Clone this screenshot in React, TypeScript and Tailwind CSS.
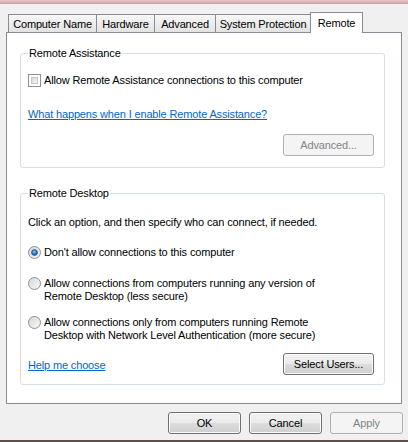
import React from 'react';

const TABS = [
  { label: 'Computer Name', w: 'w-[89px]' },
  { label: 'Hardware', w: 'w-[59px]' },
  { label: 'Advanced', w: 'w-[62px]' },
  { label: 'System Protection', w: 'w-[96px]' }
];

const BTN =
  'h-[22px] rounded-[3px] border border-[#707070] bg-[linear-gradient(to_bottom,#f2f2f2_0%,#ebebeb_50%,#dddddd_50%,#cfcfcf_100%)] shadow-[inset_0_0_0_1px_#fbfbfb] text-black flex items-center justify-center';
const BTN_OFF =
  'h-[22px] rounded-[3px] border border-[#adb2b5] bg-[#f4f4f4] text-[#838383] flex items-center justify-center';

function Checkbox() {
  return (
    <span className="w-[13px] h-[13px] shrink-0 border border-[#8e8f8f] bg-white p-[2px] flex">
      <span className="flex-1 border border-[#c4c4c4] bg-gradient-to-br from-[#d8d8d8] to-[#f6f6f6]" />
    </span>
  );
}

function Radio({ checked }: { checked?: boolean }) {
  return (
    <svg width="13" height="13" viewBox="0 0 13 13" className="shrink-0">
      <defs>
        <linearGradient id="rg" x1="0" y1="0" x2="1" y2="1">
          <stop offset="0" stopColor="#d6d6d6" />
          <stop offset="1" stopColor="#fafafa" />
        </linearGradient>
        <radialGradient id="bd" cx="0.45" cy="0.4" r="0.6">
          <stop offset="0" stopColor="#8fd0ff" />
          <stop offset="0.5" stopColor="#2f80d6" />
          <stop offset="1" stopColor="#1b4f9c" />
        </radialGradient>
      </defs>
      <circle cx="6.5" cy="6.5" r="6" fill="url(#rg)" stroke="#8e8f8f" strokeWidth="1" />
      {checked && <circle cx="6.5" cy="6.5" r="3" fill="url(#bd)" stroke="#1d4a8f" strokeWidth="0.6" />}
    </svg>
  );
}

export default function App() {
  return (
    <div className="w-[408px] h-[442px] bg-[#f0f0f0] flex flex-col overflow-hidden text-[11px] leading-[13px] tracking-[-0.15px] text-black font-['Liberation_Sans',Arial,sans-serif]">
      <div className="h-[4px] bg-gradient-to-b from-[#eac6c6] to-[#d8a8a8] border-b border-[#c9a3a3]" />

      {/* tabs */}
      <div className="flex items-end pl-[8px] mt-[8px] h-[21px] relative z-10">
        {TABS.map((t, i) => (
          <div
            key={t.label}
            className={`${t.w} h-[18px] mb-px ${i > 0 ? '-ml-px' : ''} border border-b-0 border-[#898c95] bg-gradient-to-b from-[#f7f7f7] to-[#e3e3e3] flex items-center justify-center pt-[2px]`}
          >
            {t.label}
          </div>
        ))}
        <div className="w-[53px] h-[21px] -ml-px border border-b-0 border-[#898c95] bg-white flex items-start justify-center pt-[4px]">
          Remote
        </div>
      </div>

      {/* page */}
      <div className="-mt-px ml-[6px] w-[396px] h-[372px] border border-[#898c95] bg-white pt-[14px] pl-[13px]">
        <fieldset className="w-[365px] border border-[#d5dfe5] rounded-[3px] flex flex-col pl-[7px] pr-[10px] pb-[11px]">
          <legend className="px-[1px]">Remote Assistance</legend>
          <div className="flex items-center gap-[3px] mt-[14px]">
            <Checkbox />
            <span>Allow Remote Assistance connections to this computer</span>
          </div>
          <span className="mt-[21px] text-[#0066cc] underline">What happens when I enable Remote Assistance?</span>
          <div className={`${BTN_OFF} w-[91px] self-end mt-[13px]`}>Advanced...</div>
        </fieldset>

        <fieldset className="w-[365px] mt-[19px] border border-[#d5dfe5] rounded-[3px] flex flex-col pl-[7px] pr-[10px] pb-[9px]">
          <legend className="px-[1px]">Remote Desktop</legend>
          <span className="mt-[16px]">Click an option, and then specify who can connect, if needed.</span>
          <div className="flex items-center gap-[3px] mt-[17px]">
            <Radio checked />
            <span>Don&apos;t allow connections to this computer</span>
          </div>
          <div className="flex items-start gap-[3px] mt-[18px]">
            <Radio />
            <span>
              Allow connections from computers running any version of
              <br />
              Remote Desktop (less secure)
            </span>
          </div>
          <div className="flex items-start gap-[3px] mt-[13px]">
            <Radio />
            <span>
              Allow connections only from computers running Remote
              <br />
              Desktop with Network Level Authentication (more secure)
            </span>
          </div>
          <div className="flex items-center justify-between mt-[11px]">
            <span className="text-[#0066cc] underline mt-[2px]">Help me choose</span>
            <div className={`${BTN} w-[91px] h-[21px]`}>Select Users...</div>
          </div>
        </fieldset>
      </div>

      {/* dialog buttons */}
      <div className="flex justify-end gap-[8px] pr-[5px] mt-[8px]">
        <div className={`${BTN} w-[73px]`}>OK</div>
        <div className={`${BTN} w-[73px]`}>Cancel</div>
        <div className={`${BTN_OFF} w-[73px]`}>Apply</div>
      </div>
      <div className="flex-1" />
      <div className="h-[2px] bg-[#5e4f4a]" />
    </div>
  );
}
